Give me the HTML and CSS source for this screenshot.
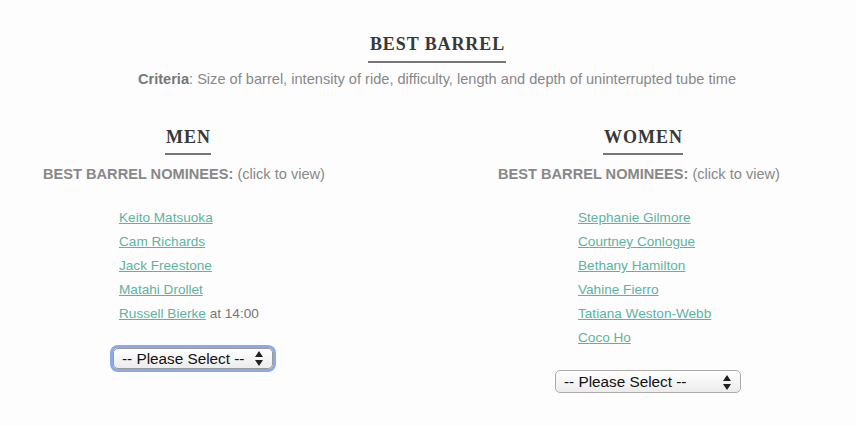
FILE: index.html
```html
<!DOCTYPE html>
<html lang="en">
<head>
    <meta charset="UTF-8">
    <meta name="viewport" content="width=device-width, initial-scale=1.0">
    <title>Best Barrel</title>
    <link rel="stylesheet" href="styles.css">
</head>
<body>
    <div class="award">
        <div class="award-head">
            <h1 class="title">BEST BARREL</h1>
            <p class="criteria"><b>Criteria</b>: Size of barrel, intensity of ride, difficulty, length and depth of uninterrupted tube time</p>
        </div>

        <div class="columns">
            <div class="column men">
                <h2 class="col-title">MEN</h2>
                <p class="nominees"><b>BEST BARREL NOMINEES:</b> (click to view)</p>
                <ul class="list">
                    <li><a href="#">Keito Matsuoka</a></li>
                    <li><a href="#">Cam Richards</a></li>
                    <li><a href="#">Jack Freestone</a></li>
                    <li><a href="#">Matahi Drollet</a></li>
                    <li><a href="#">Russell Bierke</a> at 14:00</li>
                </ul>
                <div class="select focused">
                    <span>-- Please Select --</span>
                    <svg class="arrows" width="8" height="15" viewBox="0 0 8 15">
                        <path d="M4 0 L8 6 L0 6 Z M0 9 L8 9 L4 15 Z" fill="#222"/>
                    </svg>
                </div>
            </div>

            <div class="column women">
                <h2 class="col-title">WOMEN</h2>
                <p class="nominees"><b>BEST BARREL NOMINEES:</b> (click to view)</p>
                <ul class="list">
                    <li><a href="#">Stephanie Gilmore</a></li>
                    <li><a href="#">Courtney Conlogue</a></li>
                    <li><a href="#">Bethany Hamilton</a></li>
                    <li><a href="#">Vahine Fierro</a></li>
                    <li><a href="#">Tatiana Weston-Webb</a></li>
                    <li><a href="#">Coco Ho</a></li>
                </ul>
                <div class="select">
                    <span>-- Please Select --</span>
                    <svg class="arrows" width="8" height="15" viewBox="0 0 8 15">
                        <path d="M4 0 L8 6 L0 6 Z M0 9 L8 9 L4 15 Z" fill="#222"/>
                    </svg>
                </div>
            </div>
        </div>
    </div>
</body>
</html>
```

FILE: styles.css
```css
body {
    margin: 0;
    padding: 0;
    background-color: #fdfdfd;
    font-family: "Liberation Sans", Arial, sans-serif;
    color: #888;
}

.award {
    width: 856px;
}

.award-head {
    text-align: center;
    padding: 34px 0 0 18px;
}

.title, .col-title {
    display: inline-block;
    margin: 0;
    font-family: "Liberation Serif", "Times New Roman", serif;
    font-weight: bold;
    color: #383838;
    border-bottom: 2px solid #777;
}

.title {
    font-size: 18px;
    letter-spacing: 0.9px;
    padding: 0 1px 6px 2px;
}

.criteria {
    margin: 8px 0 0;
    font-size: 14.6px;
    color: #888;
}

.criteria b {
    color: #777;
}

.columns {
    display: flex;
    padding: 0 33px 0 8px;
    gap: 95px;
    margin-top: 40px;
}

.column {
    flex: 1;
    text-align: center;
}

.col-title {
    font-size: 18px;
    letter-spacing: 1px;
    padding: 0 0 5px 1px;
}

.nominees {
    margin: 11px 0 0;
    font-size: 14.6px;
    color: #888;
    padding-right: 8px;
}

.list {
    list-style: none;
    margin: 28px 0 0;
    padding: 0;
    text-align: left;
    font-size: 13.6px;
    color: #777;
}

.list li {
    height: 24px;
    line-height: 16px;
}

.men .list {
    padding-left: 111px;
}

.women .list {
    padding-left: 115px;
}

.list a {
    color: #5bb4a3;
}

.select {
    display: flex;
    justify-content: space-between;
    align-items: center;
    box-sizing: border-box;
    height: 22px;
    padding: 0 9px 0 8px;
    border: 1px solid #aaa;
    border-radius: 5px;
    background: linear-gradient(#ffffff, #ececec);
    color: #111;
    font-size: 15.3px;
    text-align: left;
}

.men .select {
    width: 160px;
    margin: 18px 0 0 105px;
    height: 21px;
}

.select.focused {
    border-color: #999;
    box-shadow: 0 0 0 3px #8aa9ec;
}

.women .select {
    width: 186px;
    margin: 16px 0 0 92px;
    height: 23px;
}

.women .select .arrows {
    margin-top: 1px;
}
```
